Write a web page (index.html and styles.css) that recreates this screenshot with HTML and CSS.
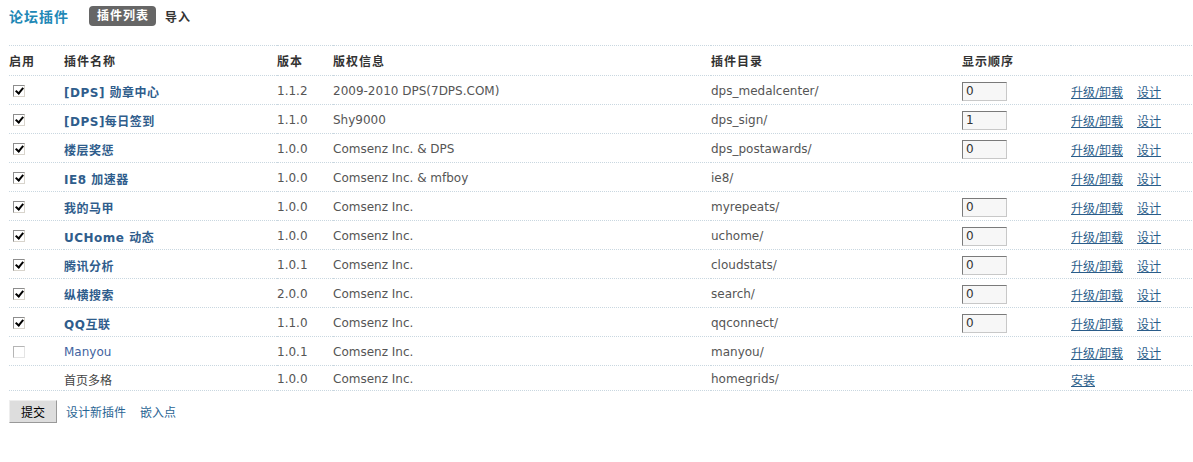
FILE: index.html
```html
<!DOCTYPE html>
<html lang="zh-CN">
<head>
    <meta charset="UTF-8">
    <title>论坛插件</title>
    <link rel="stylesheet" href="styles.css">
</head>
<body>
    <div class="page">
        <div class="top-bar">
            <h3>论坛插件</h3>
            <a class="tab current" href="#">插件列表</a>
            <a class="tab" href="#">导入</a>
        </div>

        <form>
            <table class="plugin-table">
                <tr class="head">
                    <th class="c-on">启用</th>
                    <th class="c-name">插件名称</th>
                    <th class="c-ver">版本</th>
                    <th class="c-copy">版权信息</th>
                    <th class="c-dir">插件目录</th>
                    <th class="c-order">显示顺序</th>
                    <th></th>
                </tr>
                <tr>
                    <td><input type="checkbox" class="chk" checked></td>
                    <td><a class="name" href="#">[DPS] 勋章中心</a></td>
                    <td>1.1.2</td>
                    <td>2009-2010 DPS(7DPS.COM)</td>
                    <td>dps_medalcenter/</td>
                    <td><input type="text" class="order" value="0"></td>
                    <td class="ops"><a href="#">升级/卸载</a><a href="#">设计</a></td>
                </tr>
                <tr>
                    <td><input type="checkbox" class="chk" checked></td>
                    <td><a class="name" href="#">[DPS]每日签到</a></td>
                    <td>1.1.0</td>
                    <td>Shy9000</td>
                    <td>dps_sign/</td>
                    <td><input type="text" class="order" value="1"></td>
                    <td class="ops"><a href="#">升级/卸载</a><a href="#">设计</a></td>
                </tr>
                <tr>
                    <td><input type="checkbox" class="chk" checked></td>
                    <td><a class="name" href="#">楼层奖惩</a></td>
                    <td>1.0.0</td>
                    <td>Comsenz Inc. &amp; DPS</td>
                    <td>dps_postawards/</td>
                    <td><input type="text" class="order" value="0"></td>
                    <td class="ops"><a href="#">升级/卸载</a><a href="#">设计</a></td>
                </tr>
                <tr>
                    <td><input type="checkbox" class="chk" checked></td>
                    <td><a class="name" href="#">IE8 加速器</a></td>
                    <td>1.0.0</td>
                    <td>Comsenz Inc. &amp; mfboy</td>
                    <td>ie8/</td>
                    <td></td>
                    <td class="ops"><a href="#">升级/卸载</a><a href="#">设计</a></td>
                </tr>
                <tr>
                    <td><input type="checkbox" class="chk" checked></td>
                    <td><a class="name" href="#">我的马甲</a></td>
                    <td>1.0.0</td>
                    <td>Comsenz Inc.</td>
                    <td>myrepeats/</td>
                    <td><input type="text" class="order" value="0"></td>
                    <td class="ops"><a href="#">升级/卸载</a><a href="#">设计</a></td>
                </tr>
                <tr>
                    <td><input type="checkbox" class="chk" checked></td>
                    <td><a class="name" href="#">UCHome 动态</a></td>
                    <td>1.0.0</td>
                    <td>Comsenz Inc.</td>
                    <td>uchome/</td>
                    <td><input type="text" class="order" value="0"></td>
                    <td class="ops"><a href="#">升级/卸载</a><a href="#">设计</a></td>
                </tr>
                <tr>
                    <td><input type="checkbox" class="chk" checked></td>
                    <td><a class="name" href="#">腾讯分析</a></td>
                    <td>1.0.1</td>
                    <td>Comsenz Inc.</td>
                    <td>cloudstats/</td>
                    <td><input type="text" class="order" value="0"></td>
                    <td class="ops"><a href="#">升级/卸载</a><a href="#">设计</a></td>
                </tr>
                <tr>
                    <td><input type="checkbox" class="chk" checked></td>
                    <td><a class="name" href="#">纵横搜索</a></td>
                    <td>2.0.0</td>
                    <td>Comsenz Inc.</td>
                    <td>search/</td>
                    <td><input type="text" class="order" value="0"></td>
                    <td class="ops"><a href="#">升级/卸载</a><a href="#">设计</a></td>
                </tr>
                <tr>
                    <td><input type="checkbox" class="chk" checked></td>
                    <td><a class="name" href="#">QQ互联</a></td>
                    <td>1.1.0</td>
                    <td>Comsenz Inc.</td>
                    <td>qqconnect/</td>
                    <td><input type="text" class="order" value="0"></td>
                    <td class="ops"><a href="#">升级/卸载</a><a href="#">设计</a></td>
                </tr>
                <tr>
                    <td><input type="checkbox" class="chk"></td>
                    <td><a class="name off" href="#">Manyou</a></td>
                    <td>1.0.1</td>
                    <td>Comsenz Inc.</td>
                    <td>manyou/</td>
                    <td></td>
                    <td class="ops"><a href="#">升级/卸载</a><a href="#">设计</a></td>
                </tr>
                <tr class="short">
                    <td></td>
                    <td class="plain">首页多格</td>
                    <td>1.0.0</td>
                    <td>Comsenz Inc.</td>
                    <td>homegrids/</td>
                    <td></td>
                    <td class="ops"><a href="#">安装</a></td>
                </tr>
            </table>

            <div class="footer">
                <button type="submit">提交</button>
                <a href="#">设计新插件</a>
                <a href="#">嵌入点</a>
            </div>
        </form>
    </div>
</body>
</html>
```

FILE: styles.css
```css
* {
    margin: 0;
    padding: 0;
    box-sizing: border-box;
}

body {
    font-family: "DejaVu Sans", Verdana, "Noto Sans CJK SC", sans-serif;
    font-size: 12px;
    color: #555;
    background-color: #fff;
}

.page {
    margin: 0 1px 0 9px;
}

/* title + tabs */
.top-bar {
    display: flex;
    align-items: center;
    height: 20px;
    margin-top: 6px;
}

.top-bar h3 {
    font-size: 14px;
    font-weight: bold;
    color: #2188b6;
    margin-right: 20px;
    letter-spacing: 1px;
}

.tab {
    font-weight: bold;
    color: #333;
    text-decoration: none;
    letter-spacing: 1px;
}

.tab.current {
    background-color: #666;
    color: #fff;
    border-radius: 4px;
    height: 20px;
    line-height: 20px;
    padding: 0 7px 0 8px;
    margin-right: 9px;
}

/* plugin list */
.plugin-table {
    width: 100%;
    margin-top: 19px;
    border-collapse: collapse;
    table-layout: fixed;
}

.plugin-table tr {
    height: 29px;
    border-bottom: 1px dotted #c9d7e0;
}

.plugin-table tr.head {
    border-top: 1px dotted #c9d7e0;
    height: 30px;
}

.plugin-table tr.short {
    height: 25px;
}

.plugin-table th,
.plugin-table td {
    text-align: left;
    vertical-align: middle;
    white-space: nowrap;
}

.plugin-table td {
    padding-top: 2px;
}

.plugin-table th {
    font-weight: bold;
    color: #333;
    letter-spacing: 1px;
}

.c-on { width: 55px; }
.c-name { width: 213px; }
.c-ver { width: 56px; }
.c-copy { width: 378px; }
.c-dir { width: 251px; }
.c-order { width: 109px; }

.chk {
    appearance: none;
    -webkit-appearance: none;
    display: block;
    position: relative;
    width: 12px;
    height: 12px;
    margin: 0 0 0 4px;
    background-color: #fff;
    border: 1px solid #8d8d8d;
    border-right-color: #d8d4cc;
    border-bottom-color: #d8d4cc;
}

.chk:checked::after {
    content: "";
    position: absolute;
    left: 3px;
    top: 0px;
    width: 3px;
    height: 6px;
    border: solid #000;
    border-width: 0 2px 2px 0;
    transform: rotate(40deg);
}

.chk:not(:checked) {
    border-color: #b5b5b5;
    border-right-color: #e4e4e4;
    border-bottom-color: #e4e4e4;
}

.name {
    font-weight: bold;
    color: #2f5d8c;
    text-decoration: none;
    letter-spacing: 0.5px;
}

.name.off {
    font-weight: normal;
    color: #3f63a0;
    letter-spacing: 0;
}

.plain {
    color: #444;
}

.order {
    display: block;
    width: 45px;
    height: 19px;
    padding: 0 3px;
    font-family: inherit;
    font-size: 12px;
    color: #333;
    background-color: #f7f7f7;
    border: 1px solid #7a7a7a;
    border-right-color: #c8c8c8;
    border-bottom-color: #c8c8c8;
    outline: none;
}

.ops a {
    color: #2a5d8a;
    text-decoration: underline;
    margin-right: 14px;
}

/* bottom */
.footer {
    display: flex;
    align-items: center;
    margin-top: 9px;
}

.footer button {
    width: 48px;
    height: 23px;
    font-family: inherit;
    font-size: 12px;
    color: #000;
    background-color: #ddd;
    border: 1px solid #999;
    border-top-color: #eee;
    border-left-color: #eee;
    margin-right: 9px;
    cursor: pointer;
}

.footer a {
    color: #2a6594;
    text-decoration: none;
    margin-right: 14px;
}
```
